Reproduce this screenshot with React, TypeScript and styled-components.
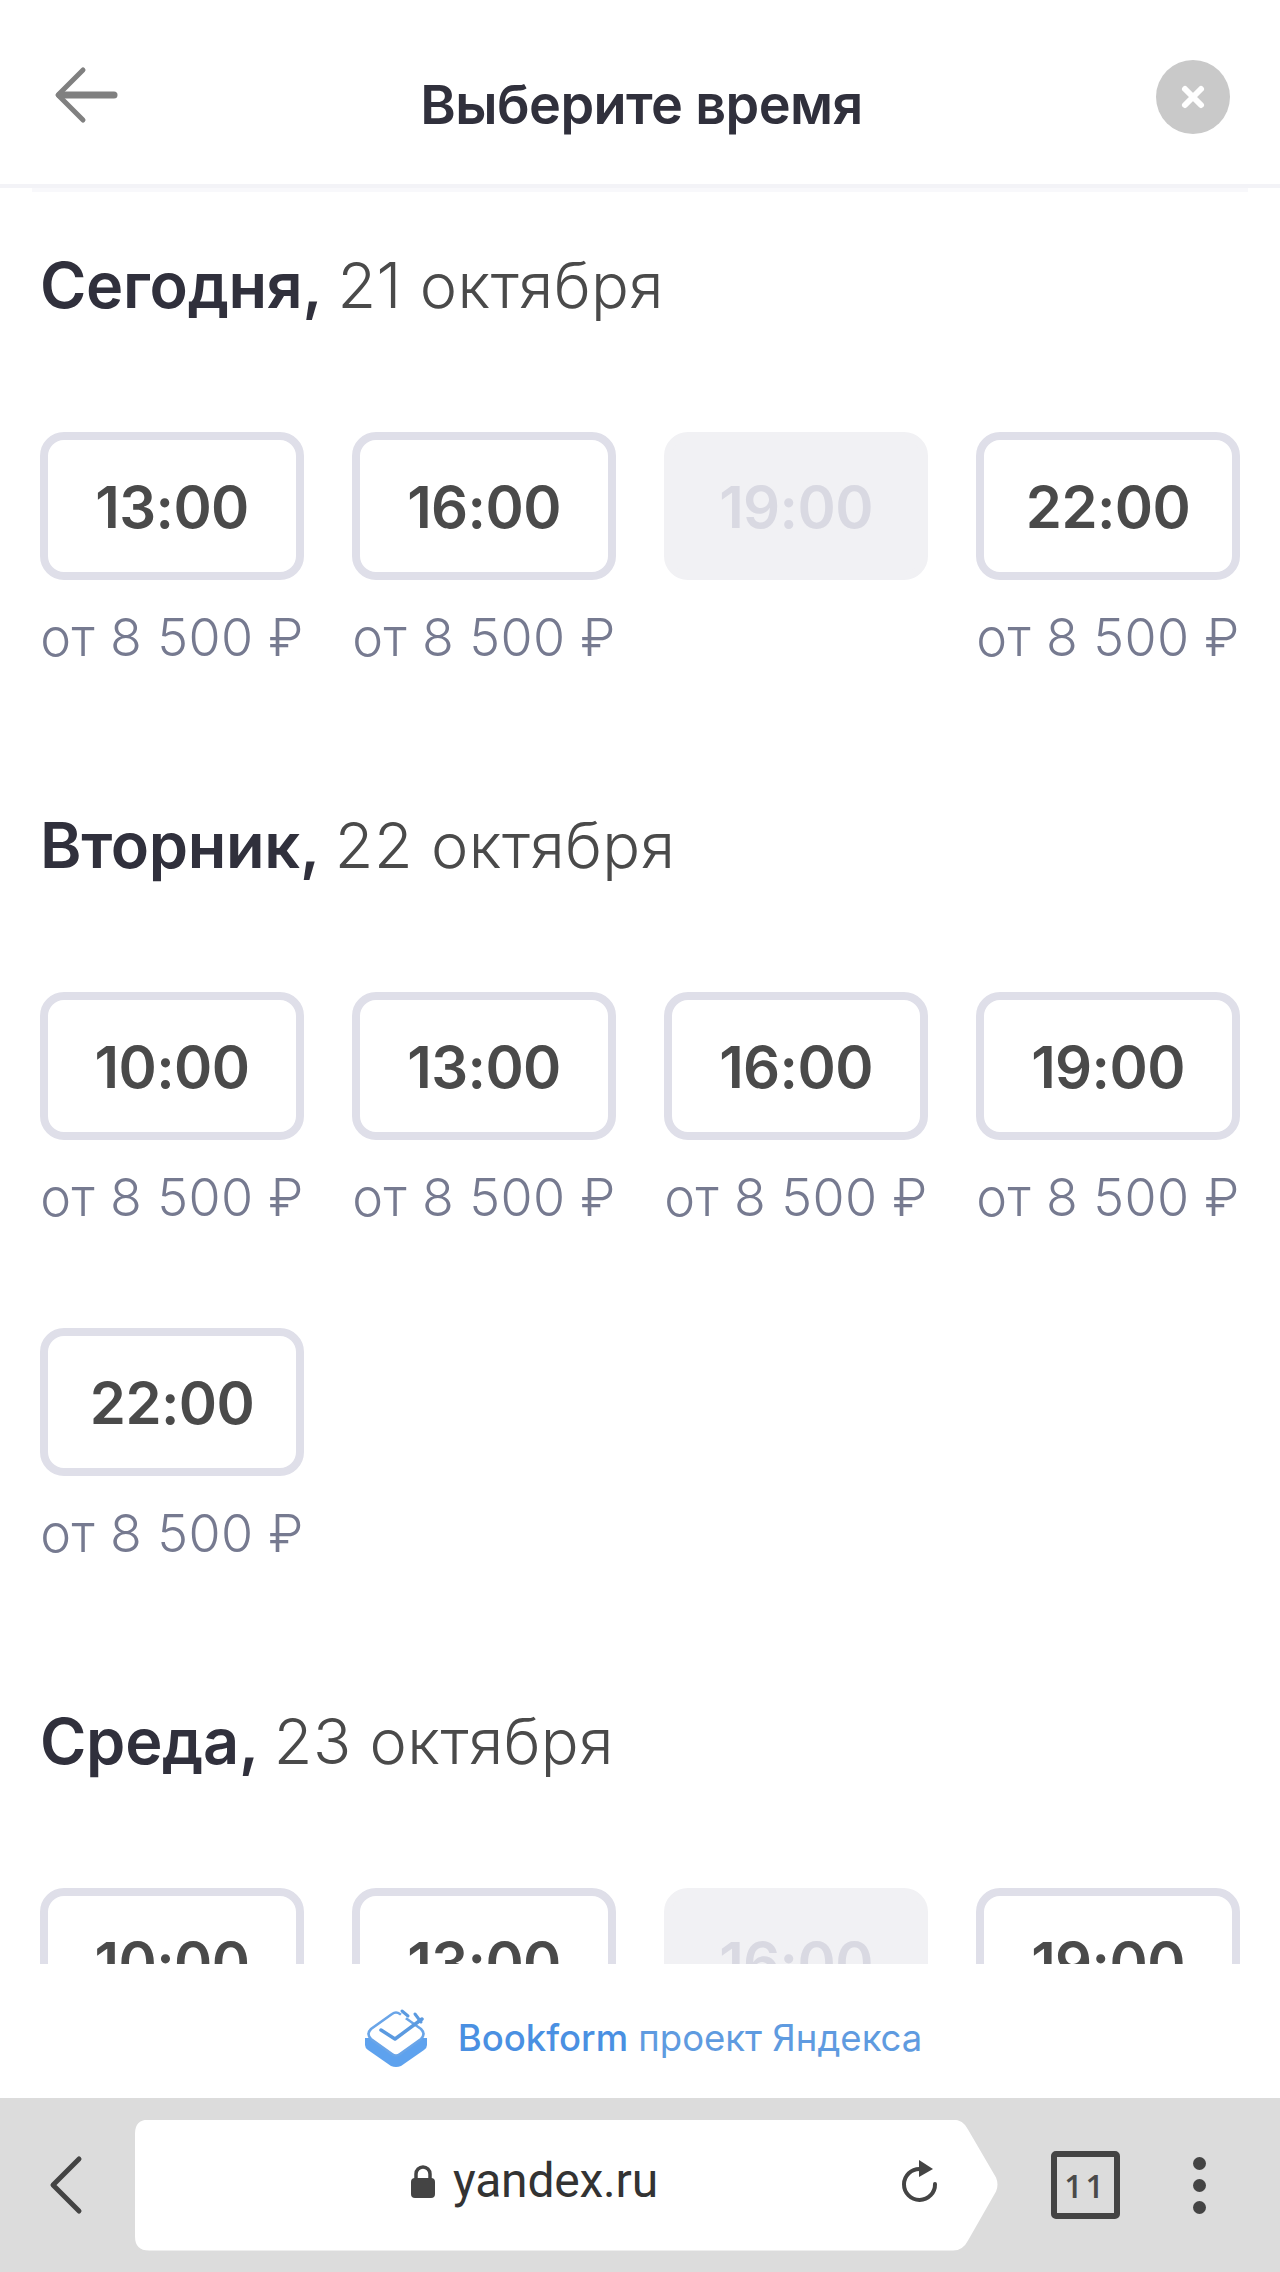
import React from "react";
import styled, { createGlobalStyle } from "styled-components";

const Global = createGlobalStyle`
  html, body { margin: 0; padding: 0; background: #fff; }
  * { box-sizing: border-box; }
`;

const Page = styled.div`
  width: 1280px;
  height: 2272px;
  display: flex;
  flex-direction: column;
  overflow: hidden;
  background: #fff;
  font-family: Inter, "Noto Sans", sans-serif;
`;

const Header = styled.header`
  flex: none;
  height: 184px;
  display: grid;
  grid-template-columns: 1fr auto 1fr;
  align-items: start;
  padding: 60px 50px 0 53px;
  background: #fff;
`;

const HeaderButton = styled.button<{ $end?: boolean }>`
  border: 0;
  padding: 0;
  background: none;
  display: flex;
  justify-content: ${(p) => (p.$end ? "flex-end" : "flex-start")};
`;

const Title = styled.h1`
  margin: 9px 0 0;
  font-size: 54px;
  line-height: 72px;
  font-weight: 600;
  letter-spacing: -0.6px;
  color: #30303c;
`;

const Rule = styled.div`
  flex: none;
  height: 8px;
  background: linear-gradient(#f3f3f7 0 4px, #fff 4px);
  &::after {
    content: "";
    display: block;
    height: 4px;
    margin: 4px 32px 0;
    background: #f8f8fb;
  }
`;

const Content = styled.main`
  flex: 1;
  min-height: 0;
  overflow: hidden;
  padding: 60px 40px 0;
  display: flex;
  flex-direction: column;
  gap: 140px;
`;

const Section = styled.section`
  display: flex;
  flex-direction: column;
  gap: 114px;
`;

const DayHeading = styled.h2`
  margin: 0;
  font-size: 63px;
  line-height: 66px;
  font-weight: 350;
  letter-spacing: 0.4px;
  word-spacing: -3px;
  color: #4a4a4a;
`;

const DayName = styled.span`
  font-weight: 600;
  letter-spacing: -0.3px;
  color: #30303c;
`;

const DayDate = styled.span`
  word-spacing: 0;
`;

const SlotGrid = styled.div`
  display: grid;
  grid-template-columns: repeat(4, 264px);
  column-gap: 48px;
  row-gap: 96px;
`;

const Slot = styled.div`
  display: flex;
  flex-direction: column;
  align-items: center;
  gap: 22px;
`;

const SlotButton = styled.button<{ $disabled?: boolean }>`
  width: 264px;
  height: 148px;
  border-radius: 24px;
  border: 8px solid ${(p) => (p.$disabled ? "#f1f1f4" : "#dfdfe9")};
  background: ${(p) => (p.$disabled ? "#f1f1f4" : "#fff")};
  color: ${(p) => (p.$disabled ? "#d9d9e2" : "#4a4a4a")};
  font-family: inherit;
  font-size: 58px;
  font-weight: 600;
  letter-spacing: -0.6px;
  padding: 2px 0 0;
`;

const Price = styled.div`
  height: 70px;
  padding-top: 1px;
  font-size: 52px;
  line-height: 70px;
  font-weight: 350;
  letter-spacing: 0.4px;
  color: #767a90;
  white-space: nowrap;
`;

const Footer = styled.div`
  flex: none;
  height: 134px;
  display: flex;
  align-items: center;
  justify-content: center;
  gap: 30px;
  background: #fff;
  padding: 14px 0 0 6px;
`;

const Brand = styled.div`
  font-size: 36.5px;
  line-height: 44px;
  color: #5f9be0;
  white-space: nowrap;
`;

const BrandName = styled.span`
  font-weight: 500;
  color: #4a90e2;
`;

const BrowserBar = styled.nav`
  flex: none;
  height: 174px;
  background: #dcdcdc;
  display: flex;
  align-items: center;
  padding: 0 0 0 48px;
`;

const BackChevron = styled.div`
  width: 87px;
  display: flex;
`;

const AddressBar = styled.div`
  width: 864px;
  height: 131px;
  background: #fff;
  clip-path: path("M14 0 H818 Q828 0 833 10 L861 58 Q864 65 861 72 L833 121 Q828 131 818 131 H14 Q0 131 0 117 V14 Q0 0 14 0 Z");
  display: flex;
  align-items: center;
  justify-content: space-between;
  padding: 0 60px 8px 276px;
`;

const Address = styled.div`
  display: flex;
  align-items: center;
  gap: 18px;
  font-family: Roboto, sans-serif;
  font-size: 48px;
  line-height: 56px;
  letter-spacing: -0.2px;
  color: #333;
`;

const TabCount = styled.div`
  width: 69px;
  height: 68px;
  margin-left: 52px;
  border: 6px solid #444;
  border-radius: 5px;
  display: flex;
  align-items: center;
  justify-content: center;
  font-family: "Open Sans", sans-serif;
  font-size: 32px;
  font-weight: 600;
  letter-spacing: 3px;
  color: #4a4a4a;
`;

const Dots = styled.div`
  margin-left: 73px;
  display: flex;
  flex-direction: column;
  gap: 9px;
`;

const Dot = styled.span`
  width: 13px;
  height: 13px;
  border-radius: 50%;
  background: #444;
`;

type SlotData = { time: string; disabled?: boolean };

const days: { name: string; date: string; slots: SlotData[] }[] = [
  {
    name: "Сегодня,",
    date: "21 октября",
    slots: [{ time: "13:00" }, { time: "16:00" }, { time: "19:00", disabled: true }, { time: "22:00" }],
  },
  {
    name: "Вторник,",
    date: "22 октября",
    slots: [{ time: "10:00" }, { time: "13:00" }, { time: "16:00" }, { time: "19:00" }, { time: "22:00" }],
  },
  {
    name: "Среда,",
    date: "23 октября",
    slots: [{ time: "10:00" }, { time: "13:00" }, { time: "16:00", disabled: true }, { time: "19:00" }],
  },
];

export default function App() {
  return (
    <Page>
      <Global />
      <Header>
        <HeaderButton aria-label="Назад">
          <svg width="68" height="70" viewBox="0 0 68 70" fill="none">
            <path d="M30 10 L5 35 L30 60" stroke="#808080" strokeWidth="5" strokeLinecap="round" strokeLinejoin="round" />
            <path d="M7 35 H61" stroke="#808080" strokeWidth="7" strokeLinecap="round" />
          </svg>
        </HeaderButton>
        <Title>Выберите время</Title>
        <HeaderButton $end aria-label="Закрыть">
          <svg width="74" height="74" viewBox="0 0 74 74">
            <circle cx="37" cy="37" r="37" fill="#c9c9c9" />
            <path d="M29 29 L45 45 M45 29 L29 45" stroke="#fff" strokeWidth="6" strokeLinecap="round" />
          </svg>
        </HeaderButton>
      </Header>
      <Rule />
      <Content>
        {days.map((day) => (
          <Section key={day.date}>
            <DayHeading>
              <DayName>{day.name}</DayName> <DayDate>{day.date}</DayDate>
            </DayHeading>
            <SlotGrid>
              {day.slots.map((slot) => (
                <Slot key={slot.time}>
                  <SlotButton $disabled={slot.disabled}>{slot.time}</SlotButton>
                  {slot.disabled ? <Price /> : <Price>от 8 500 ₽</Price>}
                </Slot>
              ))}
            </SlotGrid>
          </Section>
        ))}
      </Content>
      <Footer>
        <svg width="64" height="60" viewBox="0 0 64 60" fill="none">
          <path d="M1 30 L1 37 Q1 40 4 42 L27 58 Q32 60 37 58 L60 42 Q63 40 63 37 L63 30 Z" fill="#5ea2ee" />
          <path d="M28 6 Q32 3 36 6 L57 21 Q62 26 57 31 L36 46 Q32 49 28 46 L7 31 Q2 26 7 21 Z" fill="#fff" stroke="#6aa5e8" strokeWidth="2.5" />
          <path d="M33 16 L44 3 M50 8 L62 18" stroke="#fff" strokeWidth="6" />
          <path d="M17 22 L31 31 L58 11" stroke="#5b9ae0" strokeWidth="3.5" strokeLinecap="round" strokeLinejoin="round" fill="none" />
          <path d="M38 3 L44 8 M51 6 L57 14" stroke="#5b9ae0" strokeWidth="3" strokeLinecap="round" />
        </svg>
        <Brand>
          <BrandName>Bookform</BrandName> проект Яндекса
        </Brand>
      </Footer>
      <BrowserBar>
        <BackChevron>
          <svg width="36" height="60" viewBox="0 0 36 60" fill="none">
            <path d="M31 4 L5 30 L31 56" stroke="#444" strokeWidth="5" strokeLinecap="round" strokeLinejoin="round" />
          </svg>
        </BackChevron>
        <AddressBar>
          <Address>
            <svg width="24" height="33" viewBox="0 0 24 33">
              <path d="M5 14 V9 a7 7 0 0 1 14 0 V14" fill="none" stroke="#444" strokeWidth="3.5" />
              <rect x="0" y="13" width="24" height="20" rx="4" fill="#444" />
            </svg>
            <span>yandex.ru</span>
          </Address>
          <svg width="38" height="44" viewBox="0 0 38 44" fill="none">
            <path d="M34 25 A15.5 15.5 0 1 1 19 10" stroke="#444" strokeWidth="4" strokeLinecap="round" />
            <path d="M18 1 L32 10 L18 18 Z" fill="#444" />
          </svg>
        </AddressBar>
        <TabCount>11</TabCount>
        <Dots>
          <Dot />
          <Dot />
          <Dot />
        </Dots>
      </BrowserBar>
    </Page>
  );
}
